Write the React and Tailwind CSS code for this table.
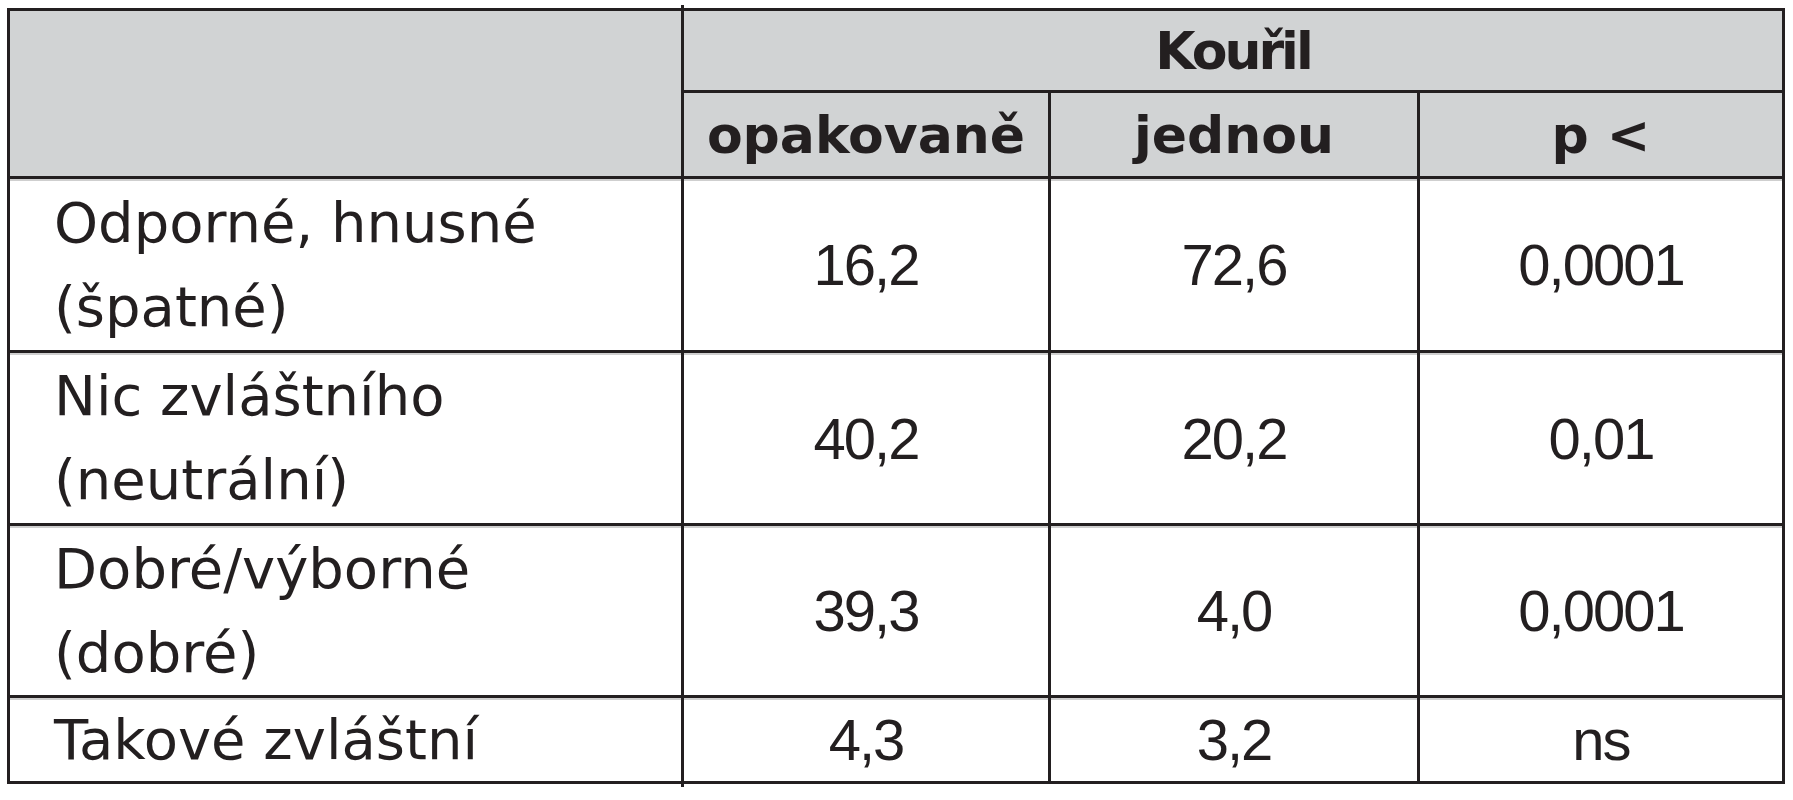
import React from "react";

const rows = [
  { label: ["Odporné, hnusné", "(špatné)"], a: "16,2", b: "72,6", p: "0,0001" },
  { label: ["Nic zvláštního", "(neutrální)"], a: "40,2", b: "20,2", p: "0,01" },
  { label: ["Dobré/výborné", "(dobré)"], a: "39,3", b: "4,0", p: "0,0001" },
  { label: ["Takové zvláštní"], a: "4,3", b: "3,2", p: "ns" },
];

function HeadCell({ children }) {
  return (
    <div className="bg-[#d1d3d4] flex items-center justify-center font-bold text-[52px] font-['DejaVu_Sans','Noto_Sans',sans-serif]">
      {children}
    </div>
  );
}

function ValueCell({ children }) {
  return (
    <div className="bg-white flex items-center justify-center text-[58px] tracking-[-2px] font-['Liberation_Sans',Arial,sans-serif] shadow-[inset_0_2px_0_#cfcfcf]">
      {children}
    </div>
  );
}

export default function App() {
  return (
    <div className="bg-white w-[1793px] h-[800px] pt-[5px] pl-[7px] text-[#231f20]">
      <div className="ml-[674px] h-[3px] w-[3px] bg-[#231f20]" />
      <div className="grid w-[1778px] bg-[#231f20] p-[3px] gap-[3px] grid-cols-[671px_364px_366px_362px] grid-rows-[79px_83px_171px_170px_169px_83px]">
        <div className="row-span-2 bg-[#d1d3d4]" />
        <div className="col-span-3 bg-[#d1d3d4] flex items-center justify-center font-bold text-[52px] tracking-[-3px] font-['DejaVu_Sans','Noto_Sans',sans-serif]">
          Kouřil
        </div>
        <HeadCell>opakovaně</HeadCell>
        <HeadCell>jednou</HeadCell>
        <HeadCell>p &lt;</HeadCell>
        {rows.map((r, i) => (
          <React.Fragment key={i}>
            <div className="bg-white flex flex-col justify-center pl-[44px] text-[56px] leading-[84px] font-['DejaVu_Sans','Noto_Sans',sans-serif] shadow-[inset_0_2px_0_#cfcfcf]">
              {r.label.map((l, j) => (
                <span key={j} className="whitespace-nowrap">
                  {l}
                </span>
              ))}
            </div>
            <ValueCell>{r.a}</ValueCell>
            <ValueCell>{r.b}</ValueCell>
            <ValueCell>{r.p}</ValueCell>
          </React.Fragment>
        ))}
      </div>
      <div className="ml-[674px] h-[3px] w-[3px] bg-[#231f20]" />
    </div>
  );
}
